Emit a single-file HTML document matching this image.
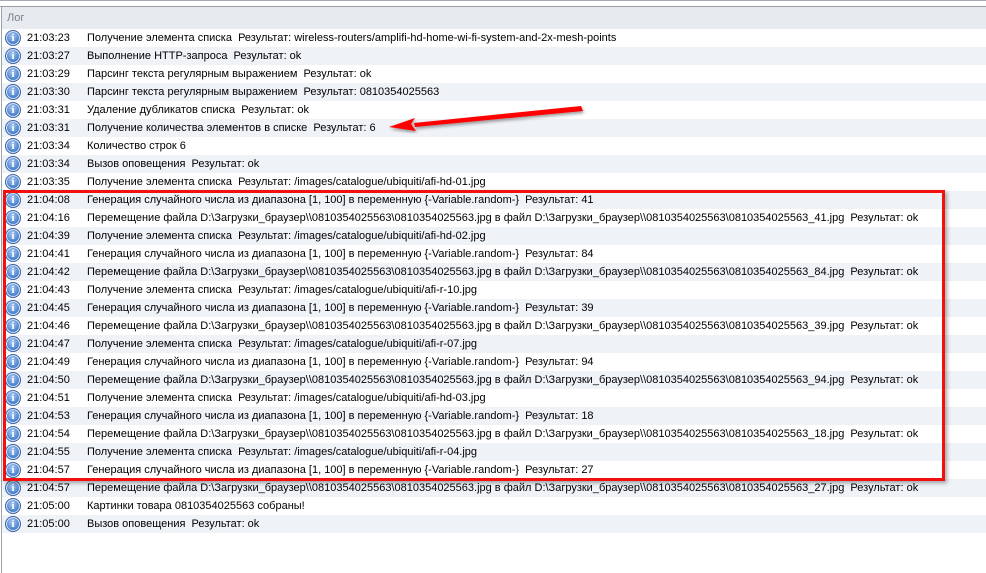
<!DOCTYPE html>
<html><head><meta charset="utf-8"><style>
body{margin:0;width:986px;height:573px;background:#fff;font-family:"Liberation Sans",sans-serif;font-size:11px;color:#000;position:relative;overflow:hidden}
.top{position:absolute;left:0;top:0;width:986px;height:6px;border-bottom:1px solid #9a9ea5;}
.top:before{content:"";position:absolute;left:0;right:0;top:0;height:1px;background:#a8abb0}
.hdr{position:absolute;left:2px;top:7px;width:984px;height:22px;background:#e7eaef;color:#7a808a;line-height:22px;text-indent:5px;font-size:11px}
.lb{position:absolute;left:1px;top:6px;width:1px;height:567px;background:#9ea3aa}
.row{position:absolute;left:2px;width:984px;height:18px;line-height:18px;white-space:nowrap}
.row.a{background:#eff2f7}
.ic{position:absolute;left:3px;top:1px;width:14px;height:14px;border-radius:50%;background:radial-gradient(circle at 45% 35%,#a9c8f0,#4a83d0 60%,#2a5fae);border:1px solid #3b62a0;box-shadow:inset 0 0 0 1px #dbe8f8;color:#fff;font:bold 11px "Liberation Serif",serif;text-align:center;line-height:14px}
.t{position:absolute;left:25px}
.m{position:absolute;left:85px}
.box{position:absolute;left:3px;top:190px;width:936px;height:285px;border:3px solid #f21010;box-shadow:2px 2px 4px rgba(0,0,0,.35)}
</style></head><body>
<div class="top"></div>
<div class="hdr">Лог</div>
<div class="lb"></div>
<div id="rows">
<div class="row" style="top:29px"><div class="ic">i</div><span class="t">21:03:23</span><span class="m">Получение элемента списка&nbsp; Результат: wireless-routers/amplifi-hd-home-wi-fi-system-and-2x-mesh-points</span></div>
<div class="row a" style="top:47px"><div class="ic">i</div><span class="t">21:03:27</span><span class="m">Выполнение HTTP-запроса&nbsp; Результат: ok</span></div>
<div class="row" style="top:65px"><div class="ic">i</div><span class="t">21:03:29</span><span class="m">Парсинг текста регулярным выражением&nbsp; Результат: ok</span></div>
<div class="row a" style="top:83px"><div class="ic">i</div><span class="t">21:03:30</span><span class="m">Парсинг текста регулярным выражением&nbsp; Результат: 0810354025563</span></div>
<div class="row" style="top:101px"><div class="ic">i</div><span class="t">21:03:31</span><span class="m">Удаление дубликатов списка&nbsp; Результат: ok</span></div>
<div class="row a" style="top:119px"><div class="ic">i</div><span class="t">21:03:31</span><span class="m">Получение количества элементов в списке&nbsp; Результат: 6</span></div>
<div class="row" style="top:137px"><div class="ic">i</div><span class="t">21:03:34</span><span class="m">Количество строк 6</span></div>
<div class="row a" style="top:155px"><div class="ic">i</div><span class="t">21:03:34</span><span class="m">Вызов оповещения&nbsp; Результат: ok</span></div>
<div class="row" style="top:173px"><div class="ic">i</div><span class="t">21:03:35</span><span class="m">Получение элемента списка&nbsp; Результат: /images/catalogue/ubiquiti/afi-hd-01.jpg</span></div>
<div class="row a" style="top:191px"><div class="ic">i</div><span class="t">21:04:08</span><span class="m">Генерация случайного числа из диапазона [1, 100] в переменную {-Variable.random-}&nbsp; Результат: 41</span></div>
<div class="row" style="top:209px"><div class="ic">i</div><span class="t">21:04:16</span><span class="m">Перемещение файла D:\Загрузки_браузер\\0810354025563\0810354025563.jpg в файл D:\Загрузки_браузер\\0810354025563\0810354025563_41.jpg&nbsp; Результат: ok</span></div>
<div class="row a" style="top:227px"><div class="ic">i</div><span class="t">21:04:39</span><span class="m">Получение элемента списка&nbsp; Результат: /images/catalogue/ubiquiti/afi-hd-02.jpg</span></div>
<div class="row" style="top:245px"><div class="ic">i</div><span class="t">21:04:41</span><span class="m">Генерация случайного числа из диапазона [1, 100] в переменную {-Variable.random-}&nbsp; Результат: 84</span></div>
<div class="row a" style="top:263px"><div class="ic">i</div><span class="t">21:04:42</span><span class="m">Перемещение файла D:\Загрузки_браузер\\0810354025563\0810354025563.jpg в файл D:\Загрузки_браузер\\0810354025563\0810354025563_84.jpg&nbsp; Результат: ok</span></div>
<div class="row" style="top:281px"><div class="ic">i</div><span class="t">21:04:43</span><span class="m">Получение элемента списка&nbsp; Результат: /images/catalogue/ubiquiti/afi-r-10.jpg</span></div>
<div class="row a" style="top:299px"><div class="ic">i</div><span class="t">21:04:45</span><span class="m">Генерация случайного числа из диапазона [1, 100] в переменную {-Variable.random-}&nbsp; Результат: 39</span></div>
<div class="row" style="top:317px"><div class="ic">i</div><span class="t">21:04:46</span><span class="m">Перемещение файла D:\Загрузки_браузер\\0810354025563\0810354025563.jpg в файл D:\Загрузки_браузер\\0810354025563\0810354025563_39.jpg&nbsp; Результат: ok</span></div>
<div class="row a" style="top:335px"><div class="ic">i</div><span class="t">21:04:47</span><span class="m">Получение элемента списка&nbsp; Результат: /images/catalogue/ubiquiti/afi-r-07.jpg</span></div>
<div class="row" style="top:353px"><div class="ic">i</div><span class="t">21:04:49</span><span class="m">Генерация случайного числа из диапазона [1, 100] в переменную {-Variable.random-}&nbsp; Результат: 94</span></div>
<div class="row a" style="top:371px"><div class="ic">i</div><span class="t">21:04:50</span><span class="m">Перемещение файла D:\Загрузки_браузер\\0810354025563\0810354025563.jpg в файл D:\Загрузки_браузер\\0810354025563\0810354025563_94.jpg&nbsp; Результат: ok</span></div>
<div class="row" style="top:389px"><div class="ic">i</div><span class="t">21:04:51</span><span class="m">Получение элемента списка&nbsp; Результат: /images/catalogue/ubiquiti/afi-hd-03.jpg</span></div>
<div class="row a" style="top:407px"><div class="ic">i</div><span class="t">21:04:53</span><span class="m">Генерация случайного числа из диапазона [1, 100] в переменную {-Variable.random-}&nbsp; Результат: 18</span></div>
<div class="row" style="top:425px"><div class="ic">i</div><span class="t">21:04:54</span><span class="m">Перемещение файла D:\Загрузки_браузер\\0810354025563\0810354025563.jpg в файл D:\Загрузки_браузер\\0810354025563\0810354025563_18.jpg&nbsp; Результат: ok</span></div>
<div class="row a" style="top:443px"><div class="ic">i</div><span class="t">21:04:55</span><span class="m">Получение элемента списка&nbsp; Результат: /images/catalogue/ubiquiti/afi-r-04.jpg</span></div>
<div class="row" style="top:461px"><div class="ic">i</div><span class="t">21:04:57</span><span class="m">Генерация случайного числа из диапазона [1, 100] в переменную {-Variable.random-}&nbsp; Результат: 27</span></div>
<div class="row a" style="top:479px"><div class="ic">i</div><span class="t">21:04:57</span><span class="m">Перемещение файла D:\Загрузки_браузер\\0810354025563\0810354025563.jpg в файл D:\Загрузки_браузер\\0810354025563\0810354025563_27.jpg&nbsp; Результат: ok</span></div>
<div class="row" style="top:497px"><div class="ic">i</div><span class="t">21:05:00</span><span class="m">Картинки товара 0810354025563 собраны!</span></div>
<div class="row a" style="top:515px"><div class="ic">i</div><span class="t">21:05:00</span><span class="m">Вызов оповещения&nbsp; Результат: ok</span></div>
</div>
<div class="box"></div>
<svg style="position:absolute;left:0;top:0" width="986" height="573">
<defs><filter id="s"><feDropShadow dx="1" dy="2" stdDeviation="1.5" flood-opacity=".4"/></filter></defs>
<g filter="url(#s)" fill="#f00">
<path d="M581 106 L583 111 L415 127 L414 123 Z"/>
<path d="M389 127 L415 118 L411 124 L416 131 Z"/>
</g>
</svg>
</body></html>
